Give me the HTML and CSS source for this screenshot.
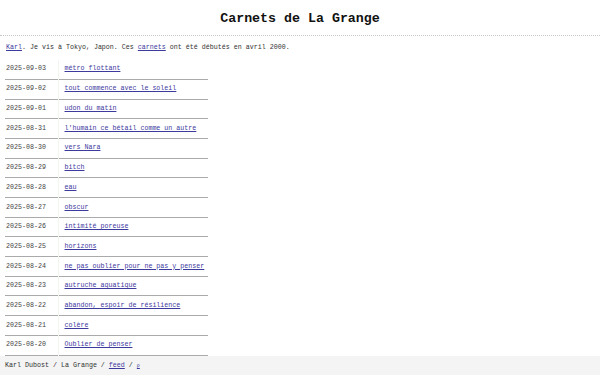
FILE: index.html
```html
<!DOCTYPE html>
<html lang="fr">
<head>
    <meta charset="UTF-8">
    <meta name="viewport" content="width=device-width, initial-scale=1.0">
    <title>Carnets de La Grange</title>
    <link rel="stylesheet" href="styles.css">
</head>
<body>
    <header class="entete">
        <h1>Carnets de La Grange</h1>
    </header>

    <main class="contenu">
        <p class="intro"><a href="#">Karl</a>. Je vis à Tokyo, Japon. Ces <a href="#">carnets</a> ont été débutés en avril 2000.</p>

        <table class="carnets">
            <tbody>
                <tr><td class="date">2025-09-03</td><td class="titre"><a href="#">métro flottant</a></td></tr>
                <tr><td class="date">2025-09-02</td><td class="titre"><a href="#">tout commence avec le soleil</a></td></tr>
                <tr><td class="date">2025-09-01</td><td class="titre"><a href="#">udon du matin</a></td></tr>
                <tr><td class="date">2025-08-31</td><td class="titre"><a href="#">l'humain ce bétail comme un autre</a></td></tr>
                <tr><td class="date">2025-08-30</td><td class="titre"><a href="#">vers Nara</a></td></tr>
                <tr><td class="date">2025-08-29</td><td class="titre"><a href="#">bitch</a></td></tr>
                <tr><td class="date">2025-08-28</td><td class="titre"><a href="#">eau</a></td></tr>
                <tr><td class="date">2025-08-27</td><td class="titre"><a href="#">obscur</a></td></tr>
                <tr><td class="date">2025-08-26</td><td class="titre"><a href="#">intimité poreuse</a></td></tr>
                <tr><td class="date">2025-08-25</td><td class="titre"><a href="#">horizons</a></td></tr>
                <tr><td class="date">2025-08-24</td><td class="titre"><a href="#">ne pas oublier pour ne pas y penser</a></td></tr>
                <tr><td class="date">2025-08-23</td><td class="titre"><a href="#">autruche aquatique</a></td></tr>
                <tr><td class="date">2025-08-22</td><td class="titre"><a href="#">abandon, espoir de résilience</a></td></tr>
                <tr><td class="date">2025-08-21</td><td class="titre"><a href="#">colère</a></td></tr>
                <tr><td class="date">2025-08-20</td><td class="titre"><a href="#">Oublier de penser</a></td></tr>
            </tbody>
        </table>
    </main>

    <footer class="pied">
        Karl Dubost / La Grange / <a href="#">feed</a> / <a href="#" class="recherche">ρ</a>
    </footer>
</body>
</html>
```

FILE: styles.css
```css
* {
    margin: 0;
    padding: 0;
    box-sizing: border-box;
    font-family: "Liberation Mono", "DejaVu Sans Mono", monospace;
}

body {
    background-color: #fff;
    color: #333;
    font-size: 6.67px;
    padding-bottom: 30px;
}

a {
    color: #3d3a9e;
    text-decoration: underline;
}

.entete {
    border-bottom: 1px dotted #c8c8c8;
    padding: 11px 0 8px;
}

.entete h1 {
    font-size: 13.3px;
    font-weight: bold;
    color: #111;
    text-align: center;
    line-height: 16px;
}

.contenu {
    padding: 0 5px;
}

.intro {
    margin-top: 8px;
    line-height: 7.7px;
    padding-left: 1px;
}

.carnets {
    border-collapse: collapse;
    margin-top: 8px;
    width: 203px;
}

.carnets tr {
    border-bottom: 1px solid #aaa;
}

.carnets td {
    height: 19.7px;
    line-height: 7.7px;
    padding: 0;
    white-space: nowrap;
}

.date {
    width: 53px;
    padding-left: 1px !important;
    color: #444;
}

.titre {
    border-left: 1px solid #f1f6ef;
    padding-left: 6px !important;
}

.pied {
    position: fixed;
    left: 0;
    right: 0;
    bottom: 0;
    height: 19px;
    background-color: #f4f4f4;
    padding: 5px 5px 0;
    line-height: 8px;
    color: #333;
}

.recherche {
    font-size: 5px;
}
```
